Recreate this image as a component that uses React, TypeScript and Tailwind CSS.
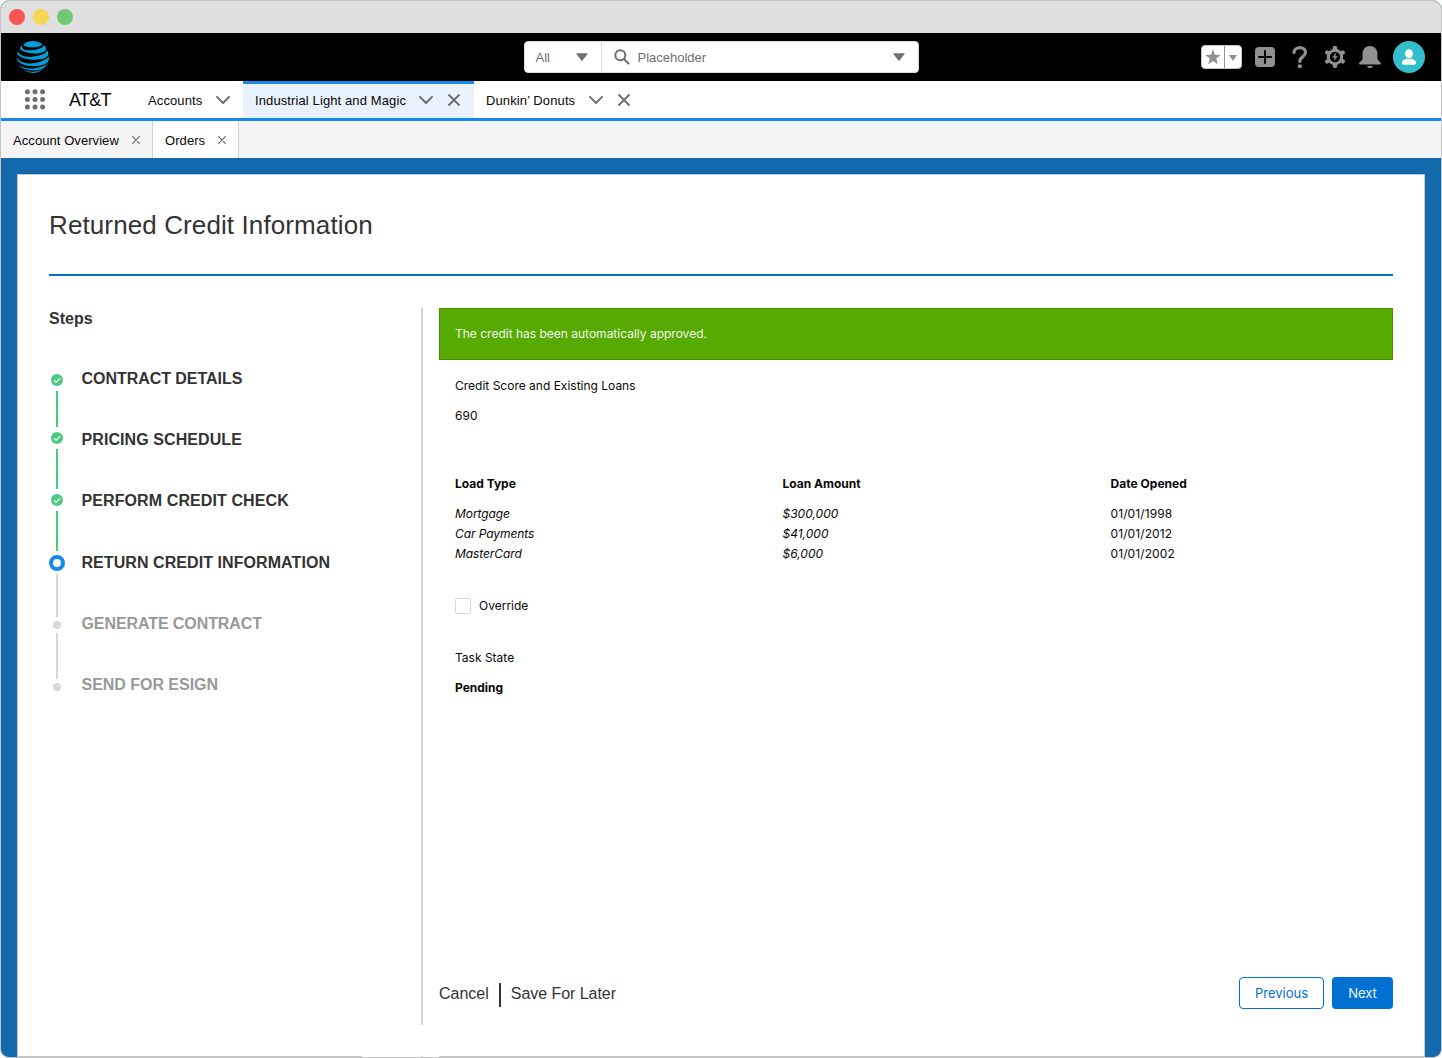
import clsx from "clsx";
import { SiAtandt } from "react-icons/si";

const STEPS = [
  { label: "CONTRACT DETAILS", state: "done", tracking: "tracking-[-0.04px]" },
  { label: "PRICING SCHEDULE", state: "done", tracking: "tracking-[0.08px]" },
  { label: "PERFORM CREDIT CHECK", state: "done", tracking: "tracking-[0.1px]" },
  { label: "RETURN CREDIT INFORMATION", state: "current", tracking: "tracking-[0.07px]" },
  { label: "GENERATE CONTRACT", state: "todo", tracking: "tracking-[-0.09px]" },
  { label: "SEND FOR ESIGN", state: "todo", tracking: "tracking-[-0.03px]" },
];

const LOANS = [
  { type: "Mortgage", amount: "$300,000", opened: "01/01/1998" },
  { type: "Car Payments", amount: "$41,000", opened: "01/01/2012" },
  { type: "MasterCard", amount: "$6,000", opened: "01/01/2002" },
];

function Chevron() {
  return (
    <svg className="h-4 w-4 shrink-0" viewBox="0 0 16 16" fill="none" stroke="#706e6b" strokeWidth="2" strokeLinecap="round" strokeLinejoin="round">
      <path d="M2 4.900 8 11l6-6.100" />
    </svg>
  );
}

function Close({ small }: { small?: boolean }) {
  return (
    <svg className={clsx("shrink-0", small ? "h-2 w-2" : "h-3 w-3")} viewBox="0 0 12 12" fill="none" stroke="#706e6b" strokeWidth="1.9" strokeLinecap="round">
      <path d="M1 1l10 10M11 1 1 11" />
    </svg>
  );
}

function Caret() {
  return (
    <svg className="h-2 w-3 shrink-0" viewBox="0 0 12 8" fill="#706e6b">
      <path d="M.9.2h10.2c.6 0 .8.5.5.9L6.5 7.5a.6.6 0 0 1-1 0L.4 1.100C.1.700.3.200.9.200z" />
    </svg>
  );
}

function CheckDot() {
  return (
    <svg className="h-3 w-3 shrink-0" viewBox="0 0 12 12" fill="none">
      <circle cx="6" cy="6" r="6" fill="#4bca81" />
      <path d="M2.900 6.200 5.100 8.200 9.200 4.200" stroke="#fff" strokeWidth="1.200" />
    </svg>
  );
}

function TopBar() {
  return (
    <div className="flex h-12 items-center bg-black">
      <SiAtandt className="ml-4 h-8 w-8 text-[#009fdb]" />
      <div className="ml-[474.5px] flex h-8 w-[395px] items-center rounded border border-[#dddbda] bg-white text-[13px] text-[#706e6b]">
        <div className="flex h-full w-[77.5px] shrink-0 items-center border-r border-[#dddbda] pl-[11px]">
          <span className="w-10 pt-[2px]">All</span>
          <Caret />
        </div>
        <svg className="ml-[11.5px] h-4 w-4 shrink-0" viewBox="0 0 16 16" fill="none" stroke="#706e6b" strokeWidth="2" strokeLinecap="round">
          <circle cx="6.300" cy="6.300" r="5" />
          <path d="m10.200 10.200 4.300 4.300" />
        </svg>
        <span className="ml-[8px] flex-1 pt-[2px]">Placeholder</span>
        <Caret />
        <span className="w-[13px]" />
      </div>
      <div className="ml-[282.5px] flex items-center">
        {/* Favorites */}
        <div className="flex h-6 w-[41px] items-center rounded border border-[#c9c7c5] bg-white">
          <div className="flex h-full w-[23px] items-center justify-center border-r border-[#969492]">
            <svg className="h-4 w-4" viewBox="0 0 16 16" fill="#919191">
              <path d="m8 .3 2 5.500 5.700.100-4.500 3.600 1.600 5.700L8 11.900l-4.800 3.300 1.600-5.700L.3 5.900 6 5.800z" />
            </svg>
          </div>
          <div className="flex flex-1 justify-center pt-px">
            <svg className="h-[6px] w-2" viewBox="0 0 8 6" fill="#919191">
              <path d="M0 0h8L4 6z" />
            </svg>
          </div>
        </div>
        <svg className="ml-[13px] h-5 w-5" viewBox="0 0 20 20">
          <rect width="20" height="20" rx="4" fill="#919191" />
          <path d="M10 4v12M4 10h12" stroke="#000" strokeWidth="2" strokeLinecap="round" />
        </svg>
        <svg className="ml-[17px] h-[22px] w-4" viewBox="0 0 16 22" fill="none">
          <path d="M2 6.500V6.200C2.200 3.500 4.700 1.600 7.800 1.600s5.700 2.100 5.700 5c0 4.400-5.700 4.200-5.700 8.800" stroke="#919191" strokeWidth="3.200" strokeLinecap="round" />
          <rect x="5.800" y="18.400" width="4" height="3.600" rx="1.300" fill="#919191" />
        </svg>
        <svg className="ml-[16px] h-[22px] w-[22px]" viewBox="0 0 22 22">
          <g fill="#919191">
            <circle cx="11" cy="11" r="8.200" />
            <rect x="8.900" y="0" width="4.200" height="22" rx="1.400" />
            <rect x="8.900" y="0" width="4.200" height="22" rx="1.400" transform="rotate(60 11 11)" />
            <rect x="8.900" y="0" width="4.200" height="22" rx="1.400" transform="rotate(-60 11 11)" />
          </g>
          <circle cx="11" cy="11" r="5.200" fill="#000" />
          <path d="M11.800 6.800 8.200 11.600h2.300l-.6 3.600 3.800-5h-2.500l1.300-3.400z" fill="#919191" />
        </svg>
        <svg className="ml-[13px] h-[22px] w-[22px]" viewBox="0 0 22 22" fill="#919191">
          <path d="M11 0C6.800 0 3.600 3.200 3.600 7.200v4.600c0 1.700-.9 2.900-2.300 3.900-.8.600-1.200 1-1.200 1.800 0 .7.500 1 1.200 1h19.400c.7 0 1.200-.3 1.200-1 0-.8-.4-1.200-1.200-1.800-1.400-1-2.300-2.200-2.300-3.900V7.200C18.400 3.200 15.200 0 11 0z" />
          <path d="M8.300 19.900h5.400c0 1.300-1.200 2.100-2.700 2.100s-2.700-.8-2.700-2.100z" />
        </svg>
        <svg className="ml-3 h-8 w-8" viewBox="0 0 32 32" fill="#fff">
          <circle cx="16" cy="16" r="16" fill="#34becd" />
          <ellipse cx="16" cy="12.800" rx="3.900" ry="4.500" />
          <path d="M8.900 21.800c0-2.300 2.500-3.400 5-4.300.6.500 1.300.7 2.100.7s1.500-.2 2.100-.7c2.500.9 5 2 5 4.300 0 1.100-.7 1.900-1.800 1.900H10.700c-1.100 0-1.800-.8-1.800-1.900z" />
        </svg>
      </div>
    </div>
  );
}

function NavBar() {
  return (
    <div className="flex h-10 border-b-[3px] border-[#1589ee] bg-white text-[13px] tracking-[0.11px] text-[#080707]">
      <svg className="ml-6 mt-[8px] h-[21px] w-5 shrink-0" viewBox="0 0 20 21" fill="#706e6b">
        {[2.8, 10.4, 18].map((y) =>
          [2.4, 10, 17.6].map((x) => <circle key={`${x}-${y}`} cx={x} cy={y} r="2.5" />)
        )}
      </svg>
      <span className="ml-6 w-[79px] text-lg leading-[39px] tracking-[-0.7px]">AT&amp;T</span>
      <div className="flex w-[95px] items-center justify-between pr-[12px]">
        <span className="pt-[2px]">Accounts</span>
        <Chevron />
      </div>
      <div className="flex w-[231px] items-center border-t-[3px] border-[#1589ee] bg-[#e8f2fd] pb-[2px] pl-3">
        <span className="w-[163px] pt-px">Industrial Light and Magic</span>
        <Chevron />
        <span className="w-[14px]" />
        <Close />
      </div>
      <div className="flex items-center pl-3">
        <span className="w-[102px] pt-[2px]">Dunkin’ Donuts</span>
        <Chevron />
        <span className="w-[14px]" />
        <Close />
      </div>
    </div>
  );
}

function SubTabs() {
  return (
    <div className="flex h-[37px] bg-[#f4f4f4] text-[13px] tracking-[0.07px] text-[#080707]">
      <div className="flex w-[152px] items-center justify-between border-r border-[#d2d2d2] pl-3 pr-[12px]">
        <span className="pt-[2px]">Account Overview</span>
        <Close small />
      </div>
      <div className="flex w-[86px] items-center justify-between border-r border-[#d2d2d2] bg-white pl-3 pr-[12px]">
        <span className="pt-[2px]">Orders</span>
        <Close small />
      </div>
    </div>
  );
}

function Steps() {
  return (
    <div className="flex w-[372px] shrink-0 flex-col">
      <h2 className="text-base font-bold leading-[21px] text-[#333]">Steps</h2>
      <div className="mt-[38.75px] flex">
        <div className="flex w-4 flex-col items-center pt-[6.25px]">
          <CheckDot />
          <span className="mt-[5px] h-[36px] w-[2px] bg-[#4bca81]" />
          <span className="h-[5px]" />
          <CheckDot />
          <span className="mt-[5px] h-[40px] w-[2px] bg-[#4bca81]" />
          <span className="h-[5px]" />
          <CheckDot />
          <span className="mt-[5px] h-[40px] w-[2px] bg-[#4bca81]" />
          <span className="mt-[4px] h-4 w-4 rounded-full border-4 border-[#1589ee] bg-white" />
          <span className="mt-[3px] h-[43px] w-[2px] bg-[#d8d8d8]" />
          <span className="mt-[4px] h-2 w-2 rounded-full bg-[#d8d8d8]" />
          <span className="mt-[4px] h-[46px] w-[2px] bg-[#d8d8d8]" />
          <span className="mt-[4px] h-2 w-2 rounded-full bg-[#d8d8d8]" />
        </div>
        <ul className="ml-[16.5px] text-base font-bold">
          {STEPS.map((step) => (
            <li
              key={step.label}
              className={clsx("h-[61.25px] leading-[21px]", step.tracking, step.state === "todo" ? "text-[#999]" : "text-[#333]")}
            >
              {step.label}
            </li>
          ))}
        </ul>
      </div>
    </div>
  );
}

function CreditDetails() {
  return (
    <div className="flex flex-1 flex-col font-[Inter,sans-serif]">
      <div className="flex h-[52px] items-center border border-[#468c00] bg-[#56aa00] px-[15px] text-xs text-[#f3f8ec]">
        The credit has been automatically approved.
      </div>
      <div className="flex flex-1 flex-col px-4 pt-4 text-xs leading-5 text-[#080707]">
        <p>Credit Score and Existing Loans</p>
        <p className="mt-[10px]">690</p>
        <div className="mt-12 flex font-bold">
          <span className="w-[327.5px]">Load Type</span>
          <span className="w-[328px]">Loan Amount</span>
          <span className="tracking-[0.03px]">Date Opened</span>
        </div>
        <div className="mt-[10px]">
          {LOANS.map((loan) => (
            <div key={loan.type} className="flex">
              <span className="w-[327.5px] italic tracking-[-0.08px]">{loan.type}</span>
              <span className="w-[328px] italic">{loan.amount}</span>
              <span className="tracking-[0.1px]">{loan.opened}</span>
            </div>
          ))}
        </div>
        <label className="mt-8 flex items-center">
          <span className="mr-2 h-4 w-4 rounded-[2px] border border-[#d8d8d8] bg-white" />
          Override
        </label>
        <p className="mt-8">Task State</p>
        <p className="mt-[10px] font-bold">Pending</p>
      </div>
      <div className="mb-4 flex items-center">
        <button className="pt-[2px] font-['Liberation_Sans',Arial,sans-serif] text-base text-[#333]">Cancel</button>
        <span className="ml-[10px] mr-[10px] mt-[3px] h-6 w-[2px] bg-[#333]" />
        <button className="pt-[2px] font-['Liberation_Sans',Arial,sans-serif] text-base tracking-[-0.05px] text-[#333]">Save For Later</button>
        <button className="ml-auto h-8 w-[85px] rounded border border-[#0070d2] bg-white pt-[2px] text-[13px] text-[#0070d2]">Previous</button>
        <button className="ml-2 h-8 w-[61px] rounded bg-[#0070d2] pt-[2px] text-[13px] text-[#eef6fd]">Next</button>
      </div>
    </div>
  );
}

export default function App() {
  return (
    <div className="flex h-[1058px] w-[1442px] flex-col overflow-hidden rounded-[9px] border border-[#c4c4c4] bg-[#1269ac] font-['Liberation_Sans',Arial,sans-serif]">
      <div className="flex h-8 shrink-0 items-center gap-2 bg-[#dfdfdf] pl-2">
        <span className="h-4 w-4 rounded-full bg-[#f95454]" />
        <span className="h-4 w-4 rounded-full bg-[#f7d653]" />
        <span className="h-4 w-4 rounded-full bg-[#72c774]" />
      </div>
      <TopBar />
      <NavBar />
      <SubTabs />
      <main className="mx-4 mt-4 flex flex-1 flex-col border border-b-0 border-[#c9c9c9] bg-white">
        <div className="flex flex-1 flex-col px-[31px]">
          <h1 className="h-[101px] border-b-2 border-[#0070d2] pt-[34px] text-[26px] leading-8 tracking-[0.11px] text-[#333]">
            Returned Credit Information
          </h1>
          <div className="mt-8 flex h-[717px]">
            <Steps />
            <div className="mr-4 w-[2px] shrink-0 bg-[#d4d4d4]" />
            <CreditDetails />
          </div>
        </div>
        {/* Bottom edge, broken between the two columns */}
        <div className="flex h-px">
          <span className="w-[344px] bg-[#c9c9c9]" />
          <span className="ml-[59px] mr-4 w-[2px] bg-[#d4d4d4]" />
          <span className="flex-1 bg-[#c9c9c9]" />
        </div>
      </main>
    </div>
  );
}
